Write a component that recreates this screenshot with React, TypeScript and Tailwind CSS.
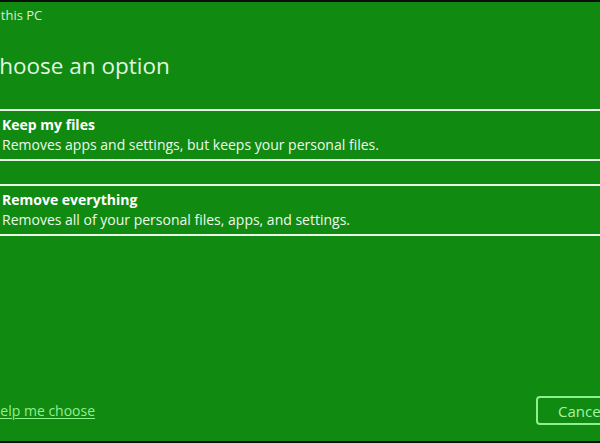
import React from 'react';

const options = [
  { title: 'Keep my files', desc: 'Removes apps and settings, but keeps your personal files.' },
  { title: 'Remove everything', desc: 'Removes all of your personal files, apps, and settings.' },
];

const App = () => {
  return (
    <div className="w-[600px] h-[443px] overflow-hidden bg-[#0b0f0b] pt-[2px] pb-[2px]" style={{ fontFamily: '"Open Sans", "Noto Sans", sans-serif' }}>
      <div className="h-full bg-[#118a11] flex flex-col overflow-hidden">
        <div className="-ml-[12px] w-[680px] flex flex-col h-full">
          {/* title bar */}
          <div className="-ml-[24px] pt-[4px] text-[13px] leading-[18px] text-[#d6efd6] whitespace-nowrap">Reset this PC</div>

          {/* heading */}
          <h1 className="-ml-[3px] mt-[27px] text-[22.5px] leading-[30px] text-[#e2f6e2] font-normal whitespace-nowrap">Choose an option</h1>

          {/* options */}
          <div className="mt-[28px] flex flex-col gap-[23px]">
            {options.map((o) => (
              <div key={o.title} className="border-y-2 border-[#e9f6e9] px-[14px] pt-[4px] pb-[4px] w-[680px]">
                <div className="text-[14px] leading-[20px] font-bold text-white">{o.title}</div>
                <div className="text-[14px] leading-[20px] text-[#eef9ee]">{o.desc}</div>
              </div>
            ))}
          </div>

          {/* footer */}
          <div className="mt-auto mb-[16px] flex items-center">
            <a className="ml-[2px] text-[14px] leading-[20px] text-[#8ff08f] underline underline-offset-2 whitespace-nowrap">Help me choose</a>
            <button className="ml-auto mr-[22px] w-[110px] h-[29px] rounded-[4px] border-2 border-[#8ff08f] text-[15px] leading-[20px] text-[#a6f4a6] text-left pl-[20px]">
              Cancel
            </button>
          </div>
        </div>
      </div>
    </div>
  );
};

export default App;
